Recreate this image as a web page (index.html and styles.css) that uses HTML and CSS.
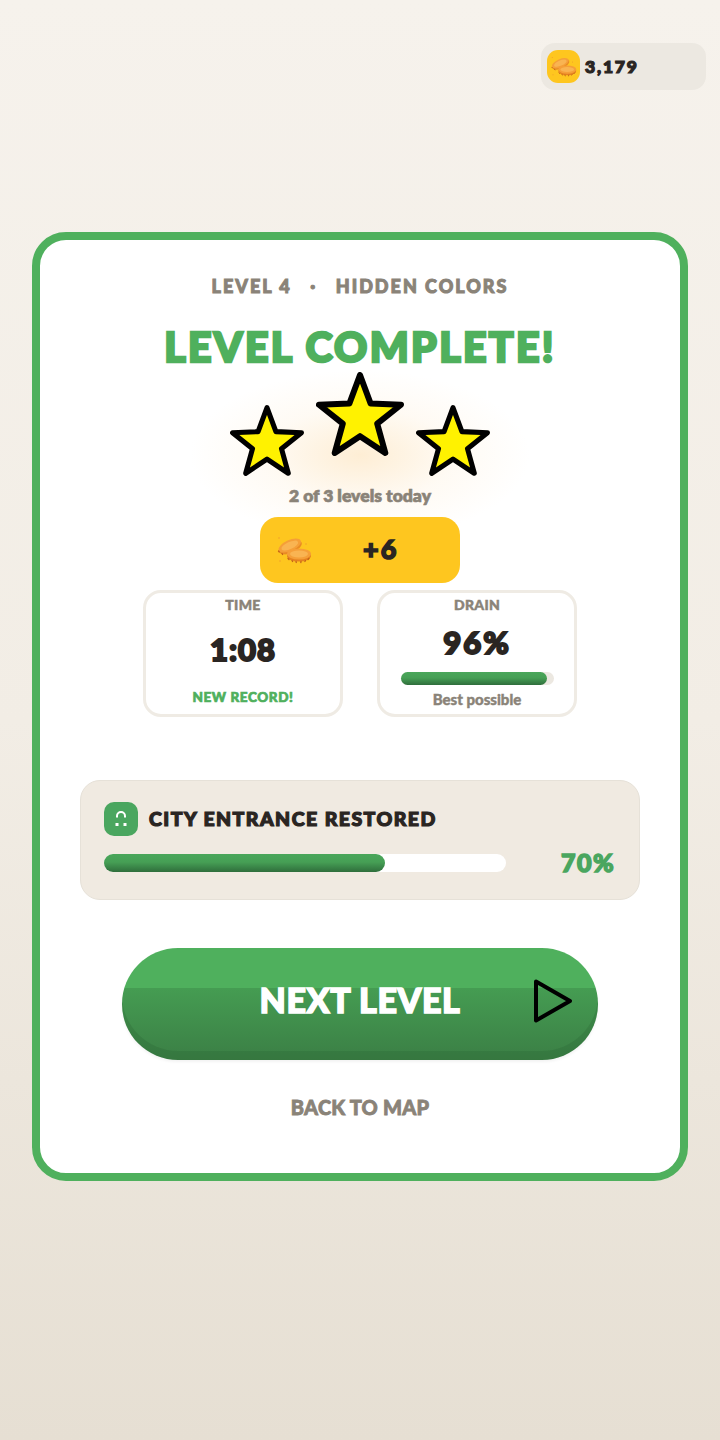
FILE: index.html
```html
<!DOCTYPE html>
<html lang="en">
<head>
<meta charset="utf-8">
<title>Level Complete</title>
<link rel="stylesheet" href="styles.css">
</head>
<body>
<svg class="defs" width="0" height="0" aria-hidden="true">
  <defs>
    <symbol id="coins" viewBox="0 0 36 28">
      <g transform="rotate(-24 14 10)">
        <ellipse cx="14" cy="11.5" rx="12" ry="5.5" fill="#e98a24"/>
        <ellipse cx="14" cy="9.5" rx="12" ry="5.5" fill="#f59f38"/>
        <ellipse cx="14" cy="9.5" rx="9" ry="3.6" fill="#f9b452"/>
      </g>
      <ellipse cx="23" cy="20" rx="12" ry="5.5" fill="#e5821f"/>
      <ellipse cx="23" cy="18" rx="12" ry="5.5" fill="#f59f38"/>
      <ellipse cx="23" cy="18" rx="9" ry="3.4" fill="#f9b452"/>
      <path d="M12 22.5l1 1M16 24.5l.6 1M20 25.500l.3 1M25 25.500l-.2 1M29.500 24.500l-.6 1M33 22.500l-1 1M2.500 15l.8 1M6 17.500l.6 1" stroke="#c4621a" stroke-width="1.300" stroke-linecap="round"/>
      <circle cx="3" cy="2" r=".7" fill="#ef9a2f"/>
      <circle cx="30" cy="8" r=".7" fill="#ef9a2f"/>
      <circle cx="4" cy="25" r=".7" fill="#ef9a2f"/>
    </symbol>
    <symbol id="star" viewBox="-1.1 -3.5 102.2 97.5">
      <polygon points="50,0 62.3,33 97.6,34.5 70,56.500 79.4,90.5 50,71 20.6,90.5 30,56.500 2.400,34.5 37.7,33" fill="#fff200" stroke="#000" stroke-width="7" stroke-linejoin="round"/>
    </symbol>
  </defs>
</svg>
<main class="page">
  <header class="topbar">
    <div class="wallet">
      <span class="wallet-icon"><svg class="coins-small"><use href="#coins"/></svg></span>
      <span class="wallet-value">3,179</span>
    </div>
  </header>

  <section class="card">
    <p class="crumb"><span>LEVEL 4</span><span class="crumb-dot">·</span><span>HIDDEN COLORS</span></p>
    <h1 class="title">LEVEL COMPLETE!</h1>

    <div class="stars">
      <div class="glow"></div>
      <svg class="star star-side"><use href="#star"/></svg>
      <svg class="star star-main"><use href="#star"/></svg>
      <svg class="star star-side"><use href="#star"/></svg>
    </div>
    <p class="today">2 of 3 levels today</p>

    <div class="reward">
      <svg class="coins-large"><use href="#coins"/></svg>
      <span class="reward-value">+6</span>
    </div>

    <div class="stats">
      <div class="stat">
        <span class="stat-label">TIME</span>
        <span class="stat-value stat-value-time">1:08</span>
        <span class="stat-record">NEW RECORD!</span>
      </div>
      <div class="stat">
        <span class="stat-label">DRAIN</span>
        <span class="stat-value">96%</span>
        <div class="drain-track"><div class="bar-fill" style="width:96%"></div></div>
        <span class="stat-note">Best possible</span>
      </div>
    </div>

    <div class="quest">
      <div class="quest-head">
        <span class="quest-icon">
          <svg width="16" height="18" viewBox="0 0 16 18"><path d="M4 7.500V6a4 4 0 0 1 8 0v1.500" fill="none" stroke="#fff" stroke-width="2"/><rect x="2.500" y="13" width="3" height="3" fill="#fff"/><rect x="10.500" y="13" width="3" height="3" fill="#fff"/></svg>
        </span>
        <span class="quest-title">CITY ENTRANCE RESTORED</span>
      </div>
      <div class="quest-progress">
        <div class="quest-track"><div class="bar-fill" style="width:70%"></div></div>
        <span class="quest-percent">70%</span>
      </div>
    </div>

    <button class="next" type="button">
      <span class="next-label">NEXT LEVEL</span>
      <svg class="next-arrow" viewBox="0 0 40 46"><path d="M3 3.500L37 23L3 42.500Z" fill="none" stroke="#000" stroke-width="4" stroke-linejoin="round"/></svg>
    </button>
    <a class="back">BACK TO MAP</a>
  </section>
</main>
</body>
</html>
```

FILE: styles.css
```css
* { box-sizing: border-box; }
html, body { margin: 0; padding: 0; }
body {
  width: 720px;
  height: 1440px;
  overflow: hidden;
  font-family: "Lato", "Liberation Sans", sans-serif;
  font-weight: 900;
  color: #2a2522;
}
.defs { position: absolute; }
.page {
  height: 1440px;
  padding: 43px 32px 0;
  display: flex;
  flex-direction: column;
  background: linear-gradient(180deg, #f6f2ec 0%, #f2ede5 50%, #e6dfd3 100%);
}
.topbar { display: flex; justify-content: flex-end; margin-right: -18px; }
.wallet {
  width: 165px;
  height: 47px;
  padding-left: 6px;
  display: flex;
  align-items: center;
  gap: 5px;
  background: #ece8e1;
  border-radius: 14px;
}
.wallet-icon {
  width: 33px;
  height: 33px;
  border-radius: 11px;
  background: #fec61f;
  display: flex;
  align-items: center;
  justify-content: center;
}
.coins-small { width: 27px; height: 21px; }
.wallet-value { font-size: 17.500px; letter-spacing: 1.800px; line-height: 1; -webkit-text-stroke: 1.200px #2a2522; }

.card {
  margin-top: 142px;
  height: 949px;
  border: 8px solid #4fb05d;
  border-radius: 34px;
  background: #fff;
  display: flex;
  flex-direction: column;
  align-items: center;
  padding-top: 33px;
}
.crumb {
  margin: 0;
  height: 26px;
  line-height: 26px;
  font-size: 18px;
  letter-spacing: 2px;
  color: #8a8378;
  display: flex;
  -webkit-text-stroke: 1px #8a8378;
}
.crumb-dot { width: 44px; text-align: center; }
.title {
  position: relative;
  margin: 23px 0 0;
  height: 50px;
  line-height: 50px;
  font-size: 41px;
  font-weight: 900;
  letter-spacing: 2.350px;
  color: #4fb05d;
  white-space: nowrap;
  -webkit-text-stroke: 2.500px #4fb05d;
}
.stars {
  position: relative;
  margin-top: 0;
  display: flex;
  gap: 12px;
  align-items: flex-start;
}
.glow {
  position: absolute;
  left: 50%;
  top: -2px;
  width: 340px;
  height: 170px;
  transform: translateX(-50%);
  background: radial-gradient(closest-side, rgba(253, 226, 184, .6), rgba(254, 238, 214, .28) 55%, rgba(255, 255, 255, 0));
}
.star { position: relative; display: block; }
.star-main { width: 88px; height: 84px; }
.star-side { width: 74px; height: 71px; margin-top: 33px; }
.today {
  position: relative;
  margin: 9px 0 0;
  height: 22px;
  line-height: 22px;
  font-size: 17.500px;
  font-weight: 800;
  color: #8a8378;
  -webkit-text-stroke: .6px #8a8378;
}
.reward {
  position: relative;
  margin-top: 10px;
  width: 200px;
  height: 66px;
  border-radius: 18px;
  background: #fec61f;
  display: flex;
  align-items: center;
  padding-left: 16px;
}
.coins-large { width: 36px; height: 28px; }
.reward-value {
  position: absolute;
  left: 103px;
  top: 18px;
  font-size: 27px;
  line-height: 1;
  color: #2a2522;
  letter-spacing: 2px;
  -webkit-text-stroke: 1.500px #2a2522;
}
.stats { margin-top: 7px; display: flex; gap: 34px; }
.stat {
  width: 200px;
  height: 127px;
  border: 3px solid #efebe4;
  border-radius: 18px;
  background: #fff;
  display: flex;
  flex-direction: column;
  align-items: center;
  padding-top: 3px;
}
.stat-label { font-size: 14px; line-height: 18px; color: #8a8378; letter-spacing: .3px; -webkit-text-stroke: .5px #8a8378; }
.stat-value { margin-top: 8px; font-size: 31px; line-height: 40px; letter-spacing: 2px; color: #2a2522; -webkit-text-stroke: 2px #2a2522; }
.stat-value-time { margin-top: 15px; letter-spacing: 1px; }
.stat-record { margin-top: 19px; font-size: 13.500px; line-height: 18px; letter-spacing: .6px; color: #4fb05d; -webkit-text-stroke: .7px #4fb05d; }
.drain-track {
  margin-top: 10px;
  width: 153px;
  height: 13px;
  border-radius: 7px;
  background: #ece8e1;
}
.bar-fill {
  height: 100%;
  border-radius: 9px;
  background: linear-gradient(180deg, #4aa65a 0%, #469f55 45%, #2f6e3c 100%);
}
.stat-note { margin-top: 5px; font-size: 15px; line-height: 18px; color: #8a8378; -webkit-text-stroke: .4px #8a8378; }
.quest {
  margin-top: 63px;
  width: 560px;
  height: 120px;
  padding: 21px 24px 0;
  border: 1px solid #e6e1d8;
  border-radius: 20px;
  background: #f0eae1;
}
.quest-head { display: flex; align-items: center; gap: 11px; margin-left: -1px; }
.quest-icon {
  width: 34px;
  height: 34px;
  border-radius: 10px;
  background: #4aa65f;
  display: flex;
  align-items: center;
  justify-content: center;
}
.quest-title { font-size: 19.500px; letter-spacing: 1.450px; line-height: 1; color: #2a2522; -webkit-text-stroke: 1.200px #2a2522; }
.quest-progress { margin-top: 14px; display: flex; align-items: center; justify-content: space-between; margin-left: -1px; }
.quest-track {
  width: 402px;
  height: 18px;
  border-radius: 9px;
  background: #fff;
}
.quest-percent { font-size: 25px; line-height: 1; letter-spacing: 1.400px; color: #4aa65f; -webkit-text-stroke: 1.500px #4aa65f; }
.next {
  position: relative;
  margin-top: 48px;
  width: 476px;
  height: 112px;
  border: 0;
  padding: 0;
  font: inherit;
  border-radius: 56px;
  background: linear-gradient(180deg, #4fb05d 0%, #4fb05d 36%, #459c52 36%, #3b7f45 100%);
  box-shadow: inset 0 -9px 0 rgba(35, 90, 45, .22), 0 2px 3px rgba(0, 0, 0, .05);
  display: flex;
  align-items: center;
  justify-content: center;
}
.next-label { font-size: 34px; line-height: 1; letter-spacing: .6px; color: #fff; margin-bottom: 9px; -webkit-text-stroke: 1.500px #fff; }
.next-arrow { position: absolute; left: 411px; top: 30px; width: 40px; height: 46px; }
.back {
  margin-top: 32px;
  font-size: 20px;
  line-height: 30px;
  letter-spacing: .2px;
  color: #8a8378;
  -webkit-text-stroke: .8px #8a8378;
}
```
